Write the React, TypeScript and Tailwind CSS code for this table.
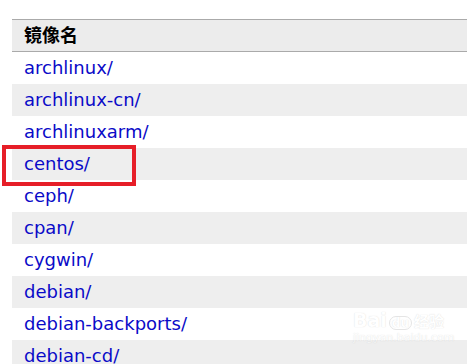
const mirrors = [
  "archlinux/",
  "archlinux-cn/",
  "archlinuxarm/",
  "centos/",
  "ceph/",
  "cpan/",
  "cygwin/",
  "debian/",
  "debian-backports/",
  "debian-cd/",
];

const font = { fontFamily: '"DejaVu Sans", Verdana, "Noto Sans CJK SC", sans-serif' };

export default function App() {
  return (
    <div className="relative h-[364px] w-[467px] overflow-hidden bg-white" style={font}>
      <div className="pt-[19px] pl-[12px]">
        <table className="w-[455px] border-collapse">
          <thead>
            <tr className="border-y border-[#aaaaaa] bg-[#ececec]">
              <th className="h-[32px] px-[12px] text-left text-[18px] font-bold text-black">镜像名</th>
            </tr>
          </thead>
          <tbody>
            {mirrors.map((name, i) => (
              <tr key={name} className={i % 2 === 1 ? "bg-[#eeeeee]" : "bg-white"}>
                <td className="h-[32px] px-[12px] text-[18px] leading-[32px]">
                  <a href="#" className="text-[#0a0ac8]">
                    {name}
                  </a>
                </td>
              </tr>
            ))}
          </tbody>
        </table>
      </div>

      {/* highlight box around centos */}
      <div className="absolute left-[2px] top-[145px] h-[41px] w-[134px] border-[4px] border-[#e61e28]" />

      {/* watermark */}
      <div className="pointer-events-none absolute left-[353px] top-[311px] flex flex-col items-start opacity-40">
        <div className="flex items-end gap-[2px] text-[19px] font-bold leading-none text-white [text-shadow:0_0_1px_#a0a0a0]">
          <span>Bai</span>
          <span className="rounded-full border border-[#c0c0c0] px-[2px] text-[12px]">du</span>
          <span className="text-[15px]">经验</span>
        </div>
        <div className="mt-[2px] text-[11px] leading-none text-white [text-shadow:0_0_1px_#a0a0a0]">jingyan.baidu.com</div>
      </div>
    </div>
  );
}
